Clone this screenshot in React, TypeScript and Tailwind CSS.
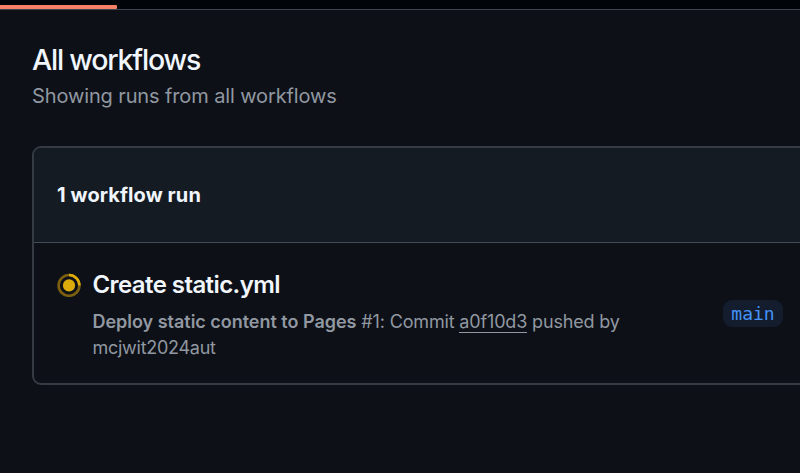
import React from "react";

function RunningIcon() {
  return (
    <svg viewBox="0 0 24 24" className="mt-[30px] h-6 w-6 shrink-0" fill="none">
      <circle cx="12" cy="12.4" r="10.4" stroke="#7c600f" strokeWidth="2.6" />
      <path d="M12 2A10.4 10.4 0 0 1 22.4 12.4" stroke="#dcab0c" strokeWidth="2.6" />
      <circle cx="12" cy="12.4" r="6.1" fill="#dcab0c" />
    </svg>
  );
}

export default function App() {
  return (
    <div className="flex h-[473px] w-[800px] flex-col overflow-hidden bg-[#0d1017] font-['Inter','Liberation_Sans',sans-serif] text-[#f0f6fc]">
      <div className="h-[10px] w-full shrink-0 border-b border-[#3d444d] bg-[#010409] pt-[5px]">
        <div className="h-[4px] w-[116.5px] rounded-r-[1px] bg-[#f78166]" />
      </div>
      <main className="flex flex-col pl-8">
        <h1 className="mt-[32px] h-[36px] whitespace-nowrap text-[28.5px] font-medium leading-[36px] tracking-[-1.2px]">All workflows</h1>
        <p className="mt-[3px] h-[30px] whitespace-nowrap text-[20px] leading-[30px] tracking-[-0.12px] text-[#9198a1]">Showing runs from all workflows</p>
        <section className="mt-[35px] h-[239px] w-[780px] rounded-[9px] border-2 border-[#353b43]">
          <header className="flex h-[95px] items-center rounded-tl-[7px] border-b border-[#444b54] bg-[#151b23] pl-[23px]">
            <h2 className="whitespace-nowrap text-[20px] font-bold leading-[30px] tracking-[0.1px]">1 workflow run</h2>
          </header>
          <div className="flex h-[140px] pl-[23px]">
            <RunningIcon />
            <div className="ml-[11.5px] w-[630.5px] pt-[26px]">
              <h3 className="whitespace-nowrap text-[24px] font-semibold leading-[32px] tracking-[-0.58px]">Create static.yml</h3>
              <div className="mt-[8px] whitespace-nowrap text-[18px] leading-[26px] tracking-[-0.16px] text-[#9198a1]">
                <div>
                  <span className="font-semibold tracking-[-0.02px]">Deploy static content to Pages</span> #1: Commit{" "}
                  <span className="inline-block h-[24px] border-b border-[#9198a1]">a0f10d3</span> pushed by
                </div>
                <div className="tracking-[-0.27px]">mcjwit2024aut</div>
              </div>
            </div>
            <span className="mt-[57px] flex h-[27px] w-[60px] items-center justify-center rounded-[9px] bg-[#131d2e] font-['DejaVu_Sans_Mono',monospace] text-[18px] leading-[26px] text-[#4493f8]">main</span>
          </div>
        </section>
      </main>
    </div>
  );
}
